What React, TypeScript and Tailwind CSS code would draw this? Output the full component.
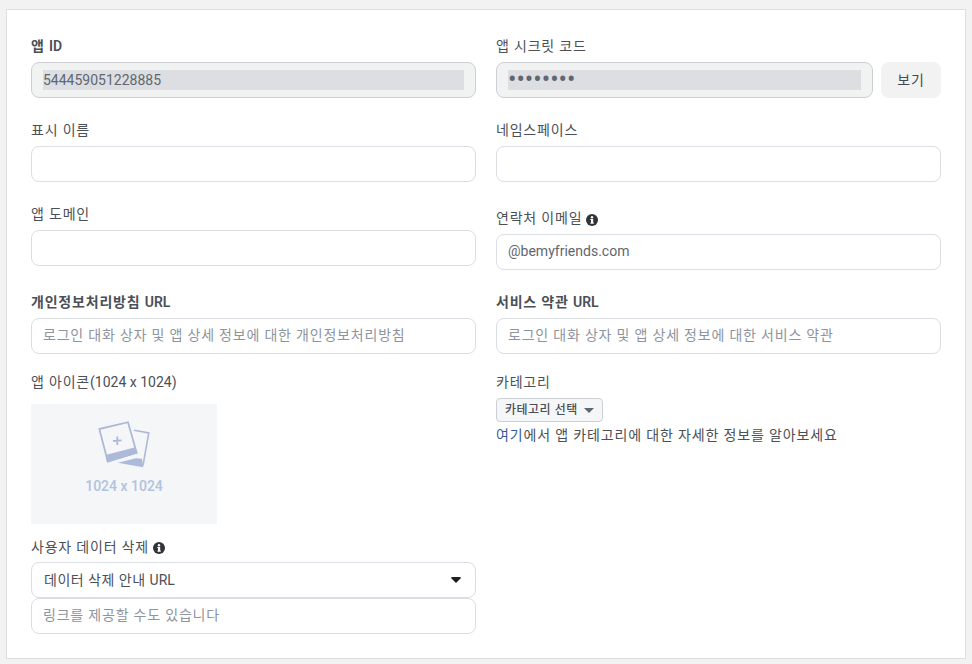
import type { ReactNode } from 'react'

const inputBox = 'h-9 w-full rounded-lg border border-[#dadde1] bg-white px-[11px] pb-[2px] text-sm text-[#606770] outline-none placeholder:text-[#8d949e] placeholder:tracking-[0.8px]'

function InfoIcon() {
  return (
    <svg width="12" height="12" viewBox="0 0 12 12" className="ml-1 mt-px shrink-0">
      <circle cx="6" cy="6" r="6" fill="#303338" />
      <rect x="5" y="5" width="2.2" height="4.4" fill="#fff" />
      <rect x="4.3" y="5" width="1.4" height="1" fill="#fff" />
      <rect x="4.3" y="8.6" width="3.6" height="1" fill="#fff" />
      <circle cx="6" cy="3.2" r="1.2" fill="#fff" />
    </svg>
  )
}

function Label({ children, bold, className = 'mb-[6px] h-5 items-center' }: { children: ReactNode; bold?: boolean; className?: string }) {
  return (
    <div className={`flex whitespace-pre text-sm tracking-[0.8px] text-[#4b4f56] ${bold ? 'font-semibold' : ''} ${className}`}>
      {children}
    </div>
  )
}

function Latin({ children }: { children: ReactNode }) {
  return <span className="tracking-normal">{children}</span>
}

function ReadOnlyValue({ children }: { children: ReactNode }) {
  return (
    <div className="flex h-9 w-full items-center rounded-lg border border-[#ccd0d5] bg-[#f1f2f2] px-[11px]">
      <div className="h-5 w-full bg-[#dcdee2] text-sm leading-5 text-[#606770]">{children}</div>
    </div>
  )
}

function ImagePlaceholder() {
  return (
    <svg width="52" height="48" viewBox="0 0 52 48" fill="none">
      <path d="M36 10.3 L50.8 12.9 L45 45.5" stroke="#adb9d8" strokeWidth="1.6" />
      <path d="M19.7 42.7 L38 38.2 L44 38.8 L45.2 47.3 Z" fill="#adb9d8" />
      <path d="M1.3 9 L30 2.2 L38.6 32.6 L9.8 41.4 Z" stroke="#adb9d8" strokeWidth="1.8" />
      <path d="M7.6 35 L37.4 27.2 L39.7 33.3 L9 42.7 Z" fill="#adb9d8" />
      <path d="M19.3 16.5 L19.3 25 M15 21 L23.6 20.4" stroke="#adb9d8" strokeWidth="1.8" />
    </svg>
  )
}

export default function App() {
  return (
    <div className="h-[664px] w-[972px] overflow-hidden bg-[#f2f2f2] pl-[6px] pt-[9px] font-['Roboto','Noto_Sans_CJK_KR',sans-serif]">
      <div className="h-[650px] w-[960px] border border-[#dddfe2] bg-white px-6 pt-[26px]">
        <div className="grid grid-cols-[445px_445px] gap-x-5">
          <div className="mb-[22px]">
            <Label bold>앱 <Latin>ID</Latin></Label>
            <ReadOnlyValue>544459051228885</ReadOnlyValue>
          </div>
          <div className="mb-[22px]">
            <Label>앱 시크릿 코드</Label>
            <div className="flex gap-2">
              <ReadOnlyValue>
                <span className="text-[25px] leading-5">••••••••</span>
              </ReadOnlyValue>
              <button className="h-9 w-[60px] shrink-0 rounded-lg bg-[#f2f2f2] text-sm tracking-[0.8px] text-[#444950]">보기</button>
            </div>
          </div>

          <div className="mb-[22px]">
            <Label>표시 이름</Label>
            <input className={inputBox} />
          </div>
          <div className="mb-[22px]">
            <Label>네임스페이스</Label>
            <input className={inputBox} />
          </div>

          <div className="mb-[22px]">
            <Label>앱 도메인</Label>
            <input className={inputBox} />
          </div>
          <div className="mb-[22px]">
            <Label className="mb-[6px] h-6 items-end">연락처 이메일<span className="mb-[2px]"><InfoIcon /></span></Label>
            <input className={inputBox} defaultValue="@bemyfriends.com" />
          </div>

          <div className="mb-[18px]">
            <Label bold>개인정보처리방침 <Latin>URL</Latin></Label>
            <input className={inputBox} placeholder="로그인 대화 상자 및 앱 상세 정보에 대한 개인정보처리방침" />
          </div>
          <div className="mb-[18px]">
            <Label bold>서비스 약관 <Latin>URL</Latin></Label>
            <input className={inputBox} placeholder="로그인 대화 상자 및 앱 상세 정보에 대한 서비스 약관" />
          </div>

          <div>
            <Label className="mb-3 h-5 items-center">앱 아이콘<Latin>(1024 x 1024)</Latin></Label>
            <div className="flex h-[120px] w-[186px] flex-col items-center bg-[#f5f6f7] pt-4">
              <ImagePlaceholder />
              <span className="mt-2 text-sm font-medium text-[#b1c2e0]">1024 x 1024</span>
            </div>
          </div>
          <div>
            <Label className="mb-[6px] h-5 items-center">카테고리</Label>
            <button className="flex h-6 items-center rounded-sm border border-[#ccd0d5] bg-[#f5f6f7] px-2 text-xs font-medium tracking-[0.5px] text-[#4b4f56]">
              카테고리 선택
              <span className="ml-[6px] mt-px h-0 w-0 border-x-[5px] border-t-[5px] border-x-transparent border-t-[#606770]" />
            </button>
            <p className="mt-[3px] text-sm leading-5 tracking-[0.85px] text-[#4b4f56]">
              <span className="text-[#385898]">여기</span>에서 앱 카테고리에 대한 자세한 정보를 알아보세요
            </p>
          </div>

          <div className="mt-[13px]">
            <Label className="mb-[5px] h-5 items-center">사용자 데이터 삭제<InfoIcon /></Label>
            <div className="flex h-9 items-center justify-between rounded-lg border border-[#dadde1] bg-white pl-3 pr-[13px] text-sm tracking-[0.5px] text-[#4b4f56]">
              <span>데이터 삭제 안내 <Latin>URL</Latin></span>
              <span className="h-0 w-0 rounded-sm border-x-[6px] border-t-[6px] border-x-transparent border-t-[#1c1e21]" />
            </div>
            <input className={inputBox} placeholder="링크를 제공할 수도 있습니다" />
          </div>
        </div>
      </div>
    </div>
  )
}
